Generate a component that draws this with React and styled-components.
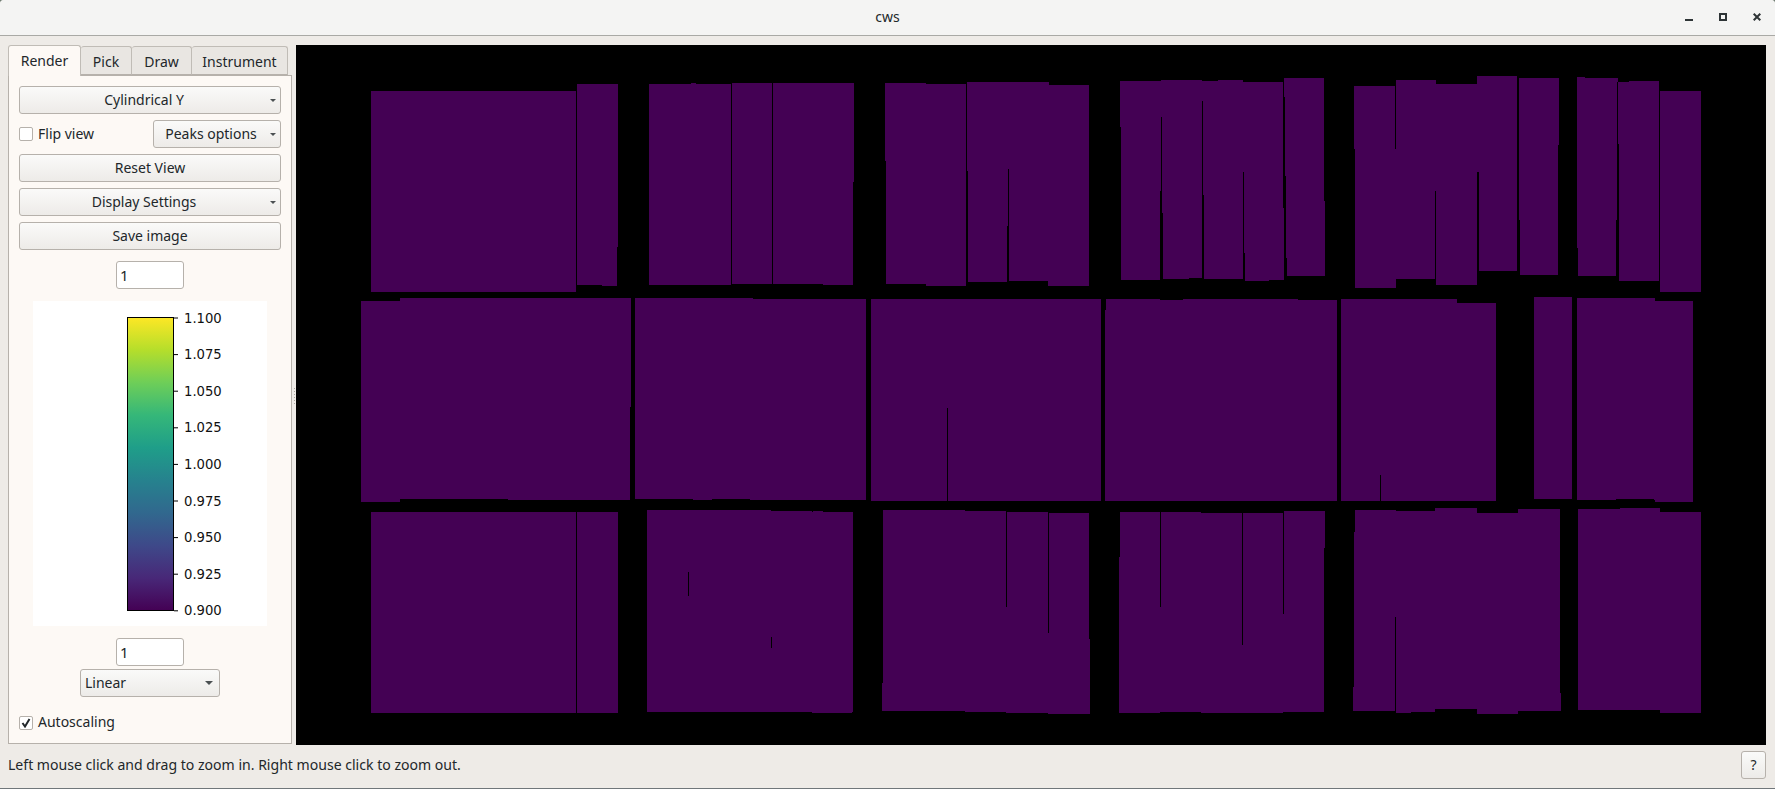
import React from "react";
import styled, { createGlobalStyle } from "styled-components";

const Global = createGlobalStyle`
  html, body { margin: 0; padding: 0; height: 100%; background: #6f7c72; overflow: hidden; }
  #root { height: 100%; }
  * { box-sizing: border-box; }
`;

const UI_FONT = `"Noto Sans", "Liberation Sans", sans-serif`;

const Win = styled.div`
  width: 1775px;
  height: 788px;
  display: flex;
  flex-direction: column;
  background: #eeebe7;
  font-family: ${UI_FONT};
  font-size: 14px;
  color: #22272a;
  border-radius: 4px 4px 0 0;
  overflow: hidden;
`;
const TitleBar = styled.header`
  height: 36px;
  flex: none;
  display: grid;
  grid-template-columns: 1fr auto 1fr;
  align-items: center;
  background: #f4f4f3;
  border-bottom: 1px solid #a9a9a5;
  padding: 0 14px 2px 14px;
`;
const Title = styled.div`
  grid-column: 2;
  font-size: 14px;
`;
const Controls = styled.div`
  grid-column: 3;
  justify-self: end;
  display: flex;
  gap: 26px;
  svg { display: block; }
`;
const Main = styled.main`
  flex: none;
  height: 709px;
  display: flex;
  padding: 9px 9px 0 8px;
`;
const Sidebar = styled.aside`
  width: 284px;
  flex: none;
  display: flex;
  flex-direction: column;
  margin-bottom: 1px;
`;
const TabBar = styled.div`
  height: 30px;
  flex: none;
  display: flex;
  align-items: flex-end;
`;
const Tab = styled.div`
  width: ${(p) => p.$w}px;
  height: ${(p) => (p.$active ? 31 : 29)}px;
  display: flex;
  align-items: center;
  justify-content: center;
  margin-bottom: ${(p) => (p.$active ? -1 : 0)}px;
  position: relative;
  z-index: ${(p) => (p.$active ? 1 : 0)};
  background: ${(p) => (p.$active ? "#fdf9f5" : "#e9e6e2")};
  border: 1px solid #c0bcb6;
  border-left-width: ${(p) => (p.$first ? 1 : 0)}px;
  border-bottom: ${(p) => (p.$active ? "none" : "1px solid #b6b1ab")};
  border-radius: 3px 3px 0 0;
  padding-bottom: ${(p) => (p.$active ? 2 : 0)}px;
  padding-top: ${(p) => (p.$active ? 0 : 1)}px;
`;
const Pane = styled.div`
  flex: 1;
  display: flex;
  flex-direction: column;
  align-items: center;
  padding: 10px 10px 0;
  background: #fdf9f5;
  border: 1px solid #b6b1ab;
`;
const Row = styled.div`
  width: 100%;
  height: 28px;
  margin-top: ${(p) => p.$mt ?? 6}px;
  display: flex;
  align-items: center;
  justify-content: space-between;
`;
const Button = styled.div`
  width: ${(p) => p.$w || "100%"};
  height: 28px;
  flex: none;
  display: flex;
  align-items: center;
  justify-content: center;
  margin-top: ${(p) => p.$mt ?? 0}px;
  padding-bottom: 2px;
  background: linear-gradient(#fafaf9, #edebe8);
  border: 1px solid #b6b1ab;
  border-radius: 3px;
`;
const Label = styled.span`
  flex: 1;
  text-align: center;
`;
const DropArrow = styled.span`
  width: 0;
  height: 0;
  margin: 2px 4px 0 2px;
  border-left: 3px solid transparent;
  border-right: 3px solid transparent;
  border-top: 3px solid #4b5052;
`;
const Combo = styled(Button)`
  justify-content: space-between;
  padding: 0 6px 2px 4px;
`;
const ComboArrow = styled.span`
  width: 0;
  height: 0;
  margin-top: 2px;
  border-left: 4px solid transparent;
  border-right: 4px solid transparent;
  border-top: 4px solid #4b5052;
`;
const Spin = styled.div`
  width: 68px;
  height: 28px;
  flex: none;
  display: flex;
  align-items: center;
  padding-left: 3px;
  font-size: 15px;
  margin-top: ${(p) => p.$mt}px;
  background: #fff;
  border: 1px solid #b6b1ab;
  border-radius: 3px;
`;
const CheckRow = styled.div`
  display: flex;
  align-items: center;
  gap: 5px;
`;
const CheckText = styled.span`
  padding-bottom: 2px;
`;
const CheckBox = styled.span`
  width: 14px;
  height: 14px;
  display: flex;
  align-items: center;
  justify-content: center;
  background: #fff;
  border: 1px solid #b6b1ab;
  border-radius: 2px;
`;
const AutoRow = styled(CheckRow)`
  align-self: flex-start;
  margin-top: 15px;
`;
const Cbar = styled.svg`
  display: block;
  flex: none;
  margin-top: 12px;
  width: 234px;
  height: 325px;
`;
const Grip = styled.div`
  width: 4px;
  flex: none;
  display: flex;
  align-items: center;
  justify-content: center;
  &::before {
    content: "";
    width: 1px;
    height: 16px;
    margin-top: 2px;
    background: repeating-linear-gradient(#a9a69f 0 1px, transparent 1px 3px);
  }
`;
const Plot = styled.svg`
  display: block;
  flex: none;
  width: 1470px;
  height: 700px;
  background: #000;
`;
const Status = styled.footer`
  flex: 1;
  display: flex;
  align-items: flex-start;
  justify-content: space-between;
  padding: 6px 9px 0 8px;
`;
const StatusText = styled.span`
  line-height: 28px;
  font-size: 14.07px;
`;
const HelpButton = styled(Button)`
  width: 25px;
`;
const Strip = styled.div`
  height: 1px;
  background: #70767a;
`;

const purple = [
  // row 1
  [371,91,576,292],[577,84,618,247],[577,247,617,285],[602,285,617,286],
  [649,84,731,285],[691,83,696,84],[732,83,772,284],
  [773,83,854,182],[773,182,853,284],[823,284,853,285],
  [885,83,926,161],[886,161,926,284],[926,84,966,286],
  [967,82,1049,171],[968,171,1048,281],[968,281,1007,282],[1049,85,1089,286],[1048,171,1049,286],
  [1120,81,1161,127],[1121,127,1161,280],[1161,80,1202,279],[1202,81,1243,279],[1218,80,1243,81],
  [1243,82,1283,208],[1243,208,1284,281],
  [1284,78,1324,201],[1284,201,1325,276],
  [1354,86,1395,149],[1355,149,1396,288],[1396,80,1436,279],[1436,84,1477,285],
  [1477,76,1517,172],[1479,172,1517,271],
  [1519,78,1559,145],[1519,145,1558,220],[1520,220,1558,275],
  [1577,77,1585,78],[1577,78,1618,82],[1577,82,1617,220],[1577,220,1616,248],[1578,248,1616,276],
  [1618,82,1659,144],[1629,81,1659,82],[1619,144,1659,281],
  [1660,91,1701,292],
  // row 2
  [361,301,400,502],[400,298,630,499],[630,298,631,407],[508,499,630,500],
  [635,298,753,499],[753,299,866,500],[693,499,712,500],[750,499,753,500],
  [871,299,1101,501],
  [1106,299,1337,501],[1105,310,1106,501],
  [1341,299,1457,501],[1457,303,1496,501],
  [1534,297,1572,499],
  [1577,298,1655,500],[1655,301,1693,502],
  // row 3
  [371,512,618,713],
  [647,510,771,712],[771,511,812,712],[812,512,852,713],[813,511,823,512],[852,512,853,712],
  [883,510,965,683],[882,683,965,711],[965,511,1006,712],[1006,512,1048,713],[1048,513,1088,714],[1088,513,1089,639],[1088,639,1090,714],
  [1120,512,1201,557],[1119,557,1201,713],[1201,513,1283,714],[1283,511,1325,548],[1283,548,1324,713],
  [1355,510,1396,532],[1354,532,1396,687],[1353,687,1396,711],[1396,511,1435,713],[1435,508,1477,709],
  [1477,513,1518,714],[1518,509,1560,693],[1518,693,1561,711],
  [1578,509,1620,710],[1620,508,1660,710],[1660,512,1701,713],
];
const black = [
  [1008,169,1009,226],[1007,226,1009,282],
  [1161,117,1162,191],[1160,191,1162,213],[1160,213,1163,280],[1189,278,1202,279],
  [1202,101,1203,195],[1202,195,1204,279],
  [1243,172,1244,253],[1243,253,1245,281],[1269,280,1284,281],
  [1284,97,1285,176],[1284,176,1286,258],[1284,258,1287,276],
  [1395,86,1396,147],[1435,191,1436,285],
  [947,408,948,501],
  [1160,299,1183,300],[1298,299,1337,300],
  [1380,475,1381,501],
  [1616,499,1654,500],
  [576,512,577,713],
  [688,572,689,596],[771,637,772,648],
  [1006,511,1007,607],[1048,513,1049,633],
  [1160,512,1161,607],[1160,712,1201,713],[1242,513,1243,645],[1283,511,1284,614],[1283,712,1324,713],[1201,713,1242,714],[1242,713,1283,714],
  [1395,617,1396,713],[1411,712,1435,713],
];
const viridis = ["#fde725","#b5de2b","#6ece58","#35b779","#1f9e89","#26828e","#31688e","#3e4989","#482878","#440154"];
const ticks = ["1.100","1.075","1.050","1.025","1.000","0.975","0.950","0.925","0.900"];

const Colorbar = () => (
  <Cbar viewBox="0 0 234 325">
    <defs>
      <linearGradient id="viridis" x1="0" y1="0" x2="0" y2="1">
        {viridis.map((c, i) => (
          <stop key={c} offset={i / (viridis.length - 1)} stopColor={c} />
        ))}
      </linearGradient>
    </defs>
    <rect width="234" height="325" fill="#fff" />
    <rect x="94.5" y="16.5" width="46" height="293" fill="url(#viridis)" stroke="#000" />
    {ticks.map((t, i) => {
      const y = 17 + i * 36.6;
      return (
        <g key={t}>
          <line x1="141" x2="145" y1={y} y2={y} stroke="#000" />
          <text x="151" y={y + 4.5} fontFamily={`"DejaVu Sans", sans-serif`} fontSize="13.2" fill="#111">{t}</text>
        </g>
      );
    })}
  </Cbar>
);

const Detector = () => (
  <Plot viewBox="296 45 1470 700" shapeRendering="crispEdges">
    {purple.map(([a, b, c, d], i) => (
      <rect key={i} x={a} y={b} width={c - a} height={d - b} fill="#440154" />
    ))}
    {black.map(([a, b, c, d], i) => (
      <rect key={i} x={a} y={b} width={c - a} height={d - b} fill="#000" />
    ))}
  </Plot>
);

const Tick = () => (
  <svg width="10" height="10" viewBox="0 0 10 10">
    <path d="M1.5 5 L4 8.5 L8.5 1" fill="none" stroke="#22272a" strokeWidth="2" />
  </svg>
);

export default function App() {
  return (
    <>
      <Global />
      <Win>
        <TitleBar>
          <Title>cws</Title>
          <Controls>
            <svg width="8" height="8" viewBox="0 0 8 8"><rect y="6" width="8" height="2" fill="#2e3436" /></svg>
            <svg width="8" height="8" viewBox="0 0 8 8"><rect x="1" y="1" width="6" height="6" fill="none" stroke="#2e3436" strokeWidth="2" /></svg>
            <svg width="8" height="8" viewBox="0 0 8 8"><path d="M.7.7l6.6 6.6M7.3.7L.7 7.3" stroke="#2e3436" strokeWidth="2" /></svg>
          </Controls>
        </TitleBar>
        <Main>
          <Sidebar>
            <TabBar>
              <Tab $active $first $w={73}>Render</Tab>
              <Tab $w={51}>Pick</Tab>
              <Tab $w={60}>Draw</Tab>
              <Tab $w={96}>Instrument</Tab>
            </TabBar>
            <Pane>
              <Button><Label>Cylindrical Y</Label><DropArrow /></Button>
              <Row>
                <CheckRow><CheckBox /><CheckText>Flip view</CheckText></CheckRow>
                <Button $w="128px"><Label>Peaks options</Label><DropArrow /></Button>
              </Row>
              <Button $mt={6}>Reset View</Button>
              <Button $mt={6}><Label>Display Settings</Label><DropArrow /></Button>
              <Button $mt={6}>Save image</Button>
              <Spin $mt={11}>1</Spin>
              <Colorbar />
              <Spin $mt={12}>1</Spin>
              <Combo $w="140px" $mt={3}>Linear<ComboArrow /></Combo>
              <AutoRow><CheckBox><Tick /></CheckBox><CheckText>Autoscaling</CheckText></AutoRow>
            </Pane>
          </Sidebar>
          <Grip />
          <Detector />
        </Main>
        <Status>
          <StatusText>Left mouse click and drag to zoom in. Right mouse click to zoom out.</StatusText>
          <HelpButton>?</HelpButton>
        </Status>
      </Win>
      <Strip />
    </>
  );
}
